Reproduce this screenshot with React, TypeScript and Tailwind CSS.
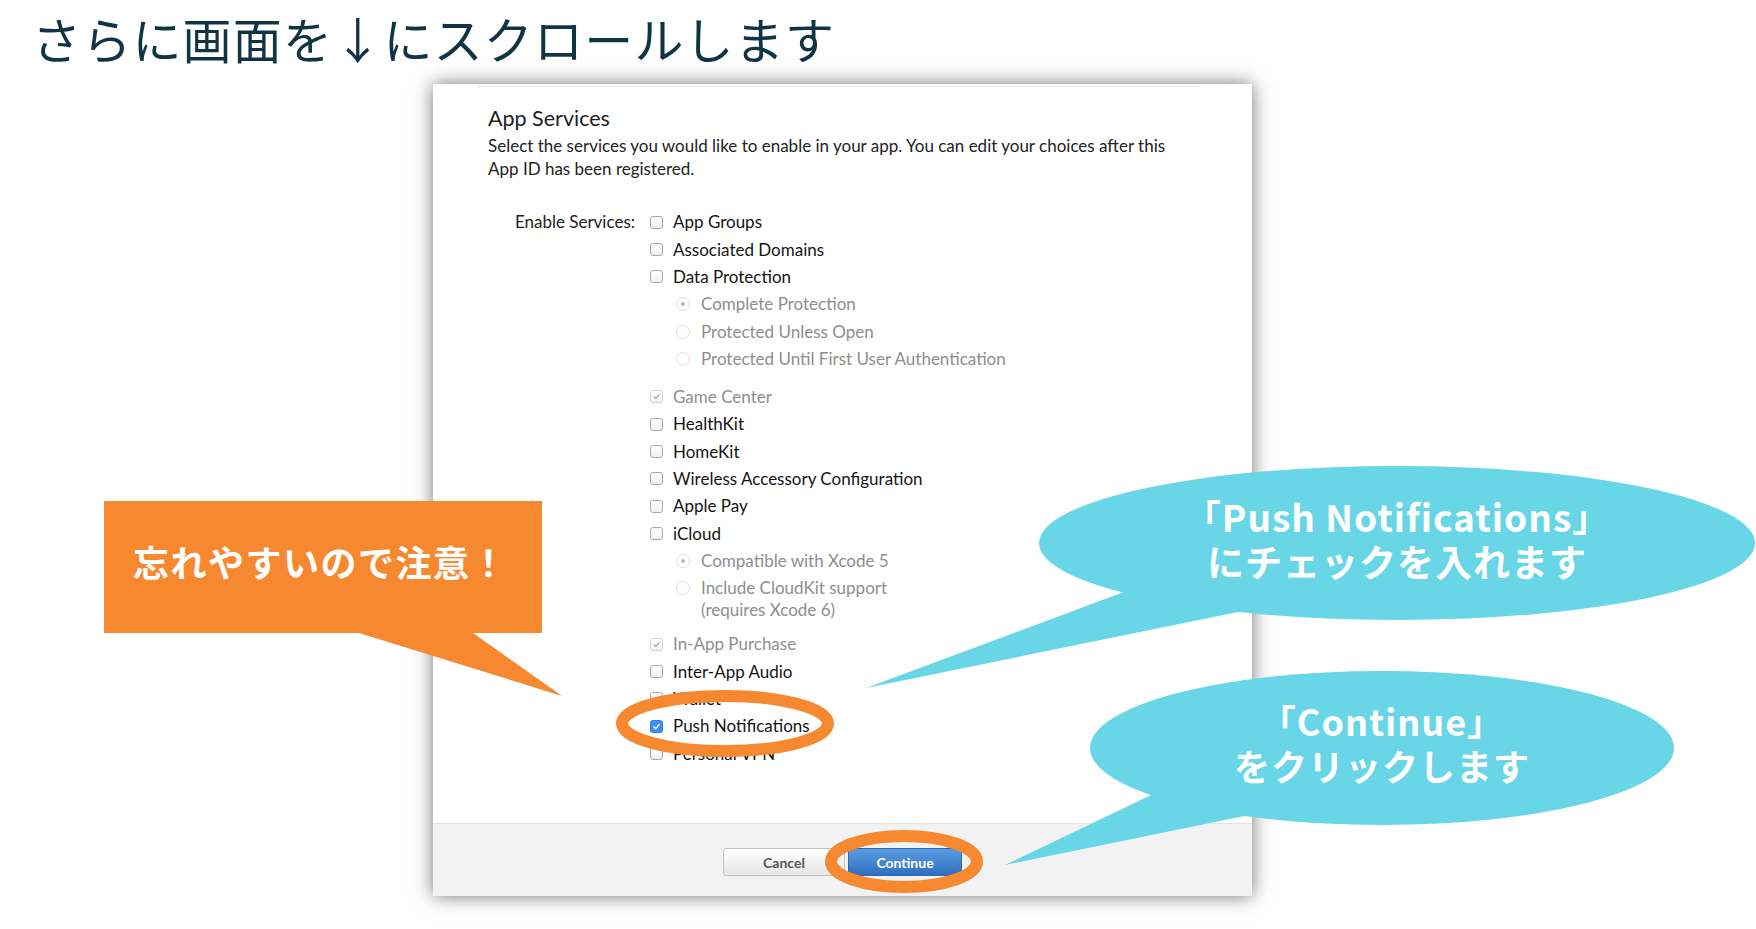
import React from "react";

type Row = {
  label: string;
  radio?: boolean;
  dot?: boolean;
  locked?: boolean;
  on?: boolean;
  sub?: string;
  mt?: string;
};

const ROWS: Row[] = [
  { label: "App Groups" },
  { label: "Associated Domains" },
  { label: "Data Protection" },
  { label: "Complete Protection", radio: true, dot: true },
  { label: "Protected Unless Open", radio: true },
  { label: "Protected Until First User Authentication", radio: true },
  { label: "Game Center", locked: true, mt: "mt-[10.6px]" },
  { label: "HealthKit" },
  { label: "HomeKit" },
  { label: "Wireless Accessory Configuration" },
  { label: "Apple Pay" },
  { label: "iCloud" },
  { label: "Compatible with Xcode 5", radio: true, dot: true },
  { label: "Include CloudKit support", sub: "(requires Xcode 6)", radio: true },
  { label: "In-App Purchase", locked: true, mt: "mt-[9.3px]" },
  { label: "Inter-App Audio" },
  { label: "Wallet" },
  { label: "Push Notifications", on: true },
  { label: "Personal VPN" },
];

function Check({ on, locked }: { on?: boolean; locked?: boolean }) {
  if (on) {
    return (
      <span className="flex h-[13px] w-[13px] shrink-0 items-center justify-center rounded-[3px] border border-[#2f7de0] bg-[#3d8ef0]">
        <svg viewBox="0 0 10 10" className="h-[9px] w-[9px]">
          <path d="M2 5.2 4.2 7.4 8 2.6" fill="none" stroke="#fff" strokeWidth="1.6" strokeLinecap="round" strokeLinejoin="round" />
        </svg>
      </span>
    );
  }
  return (
    <span
      className={`flex h-[13px] w-[13px] shrink-0 items-center justify-center rounded-[3px] border bg-gradient-to-b from-white to-[#f1f1f1] ${
        locked ? "border-[#d4d4d4]" : "border-[#a9a9a9]"
      }`}
    >
      {locked && (
        <svg viewBox="0 0 10 10" className="h-[9px] w-[9px]">
          <path d="M2.3 5.3 4.3 7.3 7.8 2.8" fill="none" stroke="#a0a0a0" strokeWidth="1.2" strokeLinecap="round" strokeLinejoin="round" />
        </svg>
      )}
    </span>
  );
}

function Radio({ dot }: { dot?: boolean }) {
  return (
    <span className="flex h-[14px] w-[14px] shrink-0 items-center justify-center rounded-full border border-[#dedede] bg-white">
      {dot && <span className="h-[4px] w-[4px] rounded-full bg-[#b8b8b8]" />}
    </span>
  );
}

function ServiceRow({ r }: { r: Row }) {
  const muted = r.radio || r.locked;
  return (
    <div className={r.mt ?? ""}>
      <div className={`flex h-[27.35px] items-center ${r.radio ? "pl-[26px]" : ""}`}>
        {r.radio ? <Radio dot={r.dot} /> : <Check on={r.on} locked={r.locked} />}
        <span className={`${r.radio ? "ml-[11px]" : "ml-[10px]"} whitespace-nowrap text-[17px] ${muted ? "text-[#8e8e8e]" : "text-[#141414]"}`}>
          {r.label}
        </span>
      </div>
      {r.sub && (
        <div className="-mt-[2.7px] pl-[51px] text-[17px] leading-[22px] text-[#8e8e8e]">{r.sub}</div>
      )}
    </div>
  );
}

function Panel() {
  return (
    <div className="ml-[433px] mt-[17px] flex h-[812px] w-[819px] flex-col bg-white font-[Lato,sans-serif] shadow-[0_0_18px_rgba(0,0,0,0.55)]">
      <div className="flex-1">
        <div className="ml-[44px] mr-[52px] mt-[2px] h-px bg-[#e4e4e4]" />
        <div className="px-[55px]">
          <h2 className="mt-[19px] text-[21.5px] leading-[24px] text-[#1e1e1e]">App Services</h2>
          <p className="mt-[3.5px] w-[700px] text-[17px] leading-[23px] text-[#222]">
            Select the services you would like to enable in your app. You can edit your choices after this App ID has been registered.
          </p>
          <div className="mt-[29px] flex">
            <div className="flex h-[27.35px] w-[147px] items-center justify-end whitespace-nowrap text-[17px] text-[#222]">Enable Services:</div>
            <div className="ml-[15px] flex flex-col">
              {ROWS.map((r) => (
                <ServiceRow key={r.label} r={r} />
              ))}
            </div>
          </div>
        </div>
      </div>
      <div className="flex h-[73px] justify-center gap-[3px] border-t border-[#e3e3e3] bg-[#f2f2f2] pt-[24px]">
        <button
          type="button"
          className="h-[28px] w-[122px] rounded-[3px] border border-[#c4c4c4] bg-gradient-to-b from-white to-[#e6e6e6] text-[14px] font-bold text-[#555]"
        >
          Cancel
        </button>
        <button
          type="button"
          className="h-[28px] w-[114px] rounded-[3px] border border-[#2e68b0] bg-gradient-to-b from-[#5a9de0] to-[#2f6fc0] text-[14px] font-bold text-white"
        >
          Continue
        </button>
      </div>
    </div>
  );
}

function Callouts() {
  return (
    <>
      <svg className="pointer-events-none absolute left-0 top-0" width="1756" height="929" viewBox="0 0 1756 929">
        <path d="M104 501H542V633H473L562 696L359 633H104Z" fill="#f68830" />
        <ellipse cx="1397" cy="543" rx="358" ry="77" fill="#68d6e6" />
        <polygon points="866,688 1140,586 1260,607.5" fill="#68d6e6" />
        <ellipse cx="1382" cy="748" rx="292" ry="77" fill="#68d6e6" />
        <polygon points="1005,865 1170,786 1265,811.7" fill="#68d6e6" />
        <ellipse cx="725" cy="723.5" rx="103" ry="27.5" fill="none" stroke="#f68830" strokeWidth="12" />
        <ellipse cx="904" cy="861.5" rx="73" ry="25.5" fill="none" stroke="#f68830" strokeWidth="12" />
      </svg>
      <div className="absolute left-[133px] top-[543px] text-[36px] font-bold leading-[36px] tracking-[1.5px] text-white">
        忘れやすいので注意！
      </div>
      <div className="absolute left-[1167px] top-[493.5px] w-[460px] text-center text-[37px] font-bold leading-[45px] tracking-[1px] text-white">
        <div>「Push Notifications」</div>
        <div>にチェックを入れます</div>
      </div>
      <div className="absolute left-[1202px] top-[697.5px] w-[360px] text-center text-[36px] font-bold leading-[45px] tracking-[1px] text-white">
        <div>「Continue」</div>
        <div>をクリックします</div>
      </div>
    </>
  );
}

export default function App() {
  return (
    <div className="relative h-[929px] w-[1756px] overflow-hidden bg-white font-['Noto_Sans_CJK_JP',sans-serif]">
      <h1 className="pl-[32px] pt-[13px] text-[49px] font-normal leading-[49px] tracking-[1.2px] text-[#103444]">
        さらに画面を↓にスクロールします
      </h1>
      <div className="pt-[5px]">
        <Panel />
      </div>
      <Callouts />
    </div>
  );
}
